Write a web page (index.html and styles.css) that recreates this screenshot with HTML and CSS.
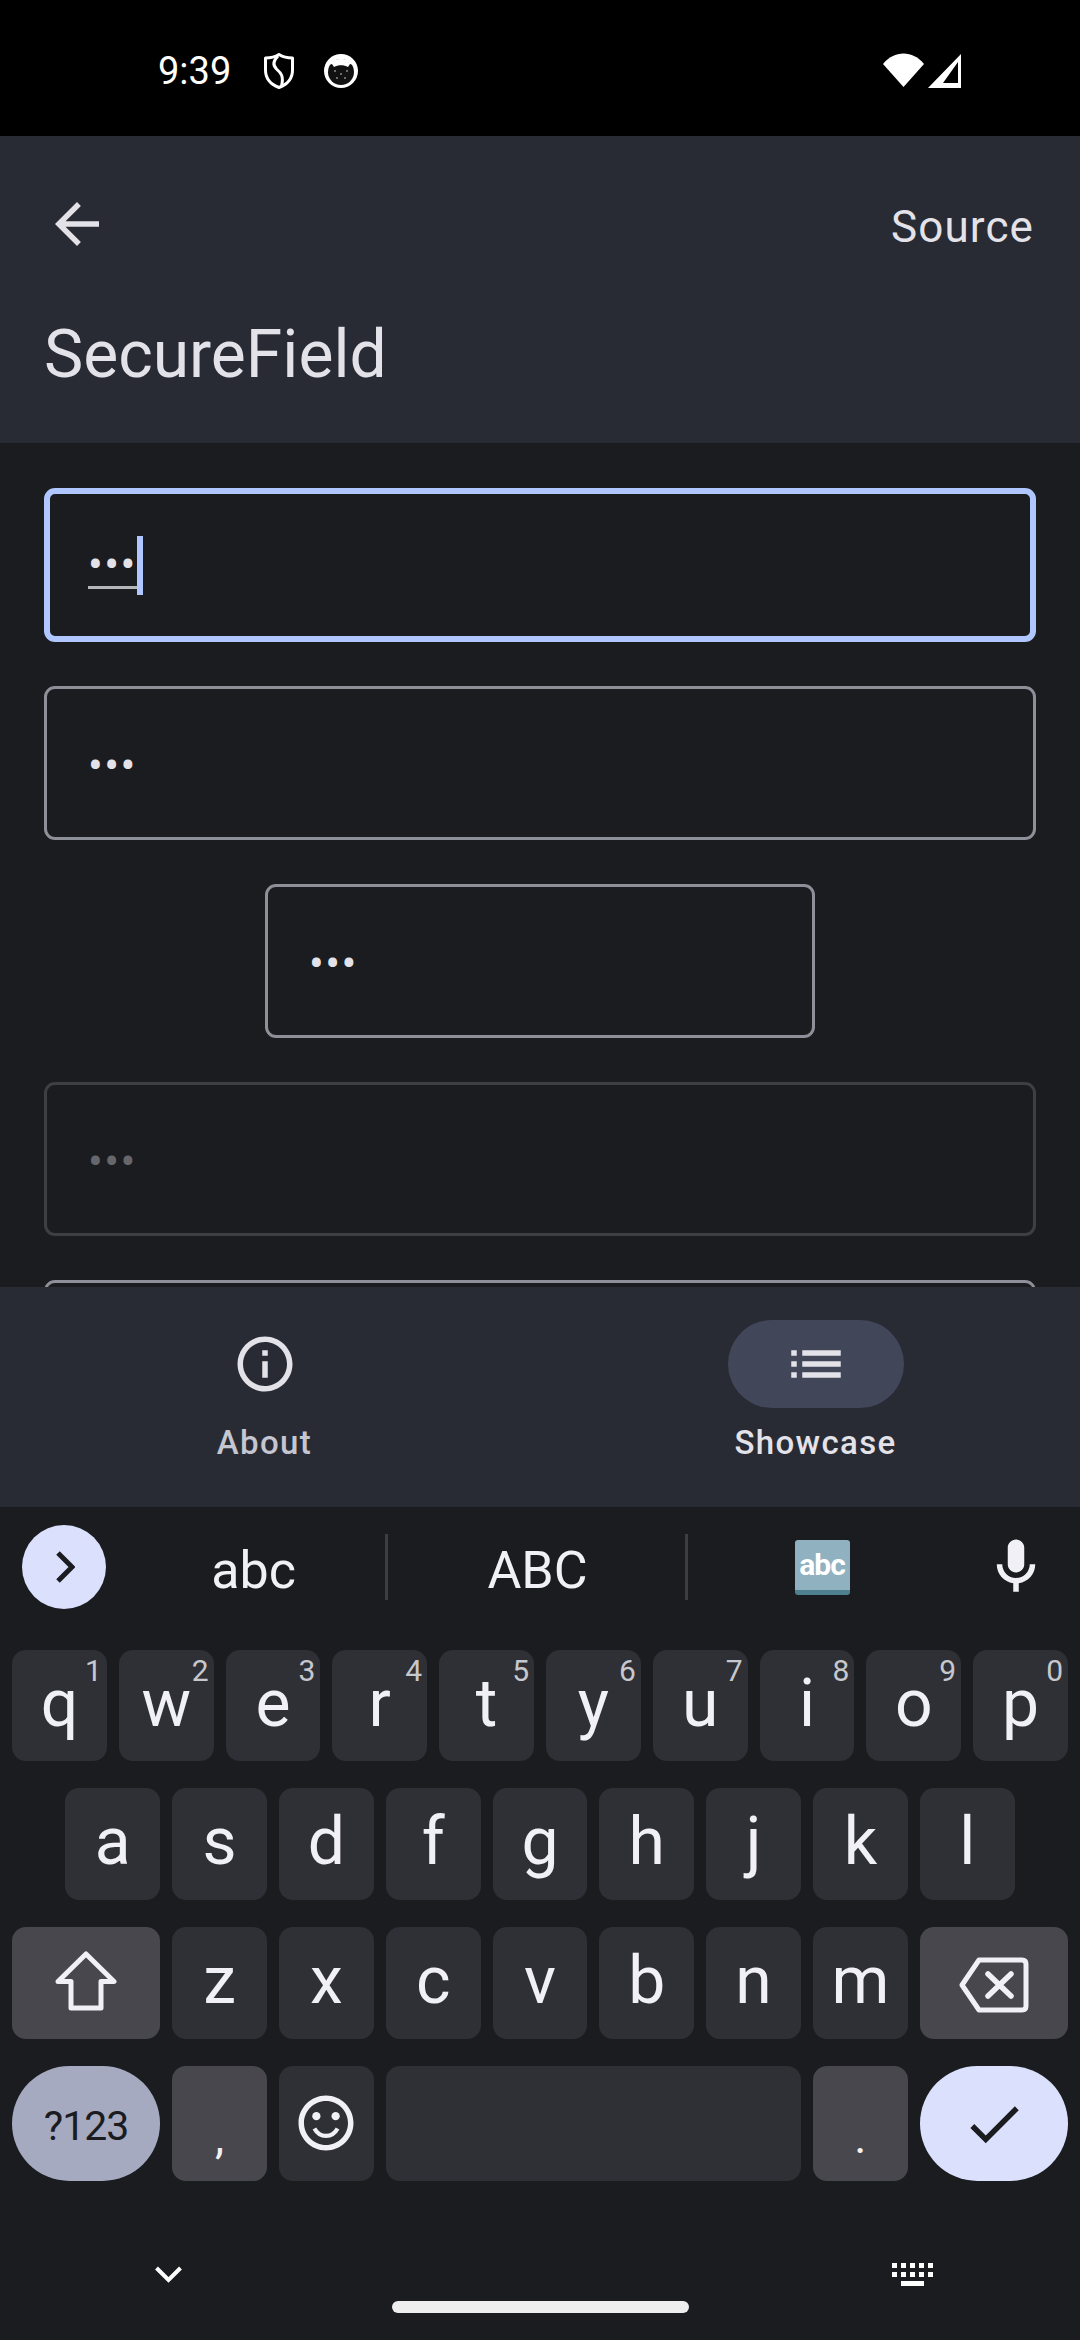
FILE: index.html
```html
<!DOCTYPE html>
<html lang="en">
<head>
<meta charset="utf-8">
<title>SecureField</title>
<link rel="stylesheet" href="styles.css">
</head>
<body>
<div class="screen">
  <div class="status">
    <span class="time">9:39</span>
    <svg class="st-shield" viewBox="0 0 30 36" width="30" height="36"><path d="M15 1.5 C19 4 24 5 28.5 5 V17 C28.5 25.5 23 31.5 15 34.5 C7 31.5 1.5 25.5 1.5 17 V5 C6 5 11 4 15 1.5Z" fill="none" stroke="#fff" stroke-width="3" stroke-linejoin="round"/><path d="M14 3 C9 8 8.5 12 12.5 16 C17 20 20 23 17.5 33" fill="none" stroke="#fff" stroke-width="3"/></svg>
    <svg class="st-cat" viewBox="0 0 36 36" width="36" height="36"><circle cx="18" cy="18" r="17" fill="#fff"/><circle cx="18" cy="19" r="13" fill="#111"/><path d="M5 12 C8 4 28 4 31 12 L27 11 L25 14 C21 11.5 15 11.5 11 14 L9 11Z" fill="#fff"/><circle cx="12" cy="18" r="1" fill="#888"/><circle cx="18" cy="21" r="1" fill="#888"/><circle cx="24" cy="18" r="1" fill="#888"/><circle cx="14" cy="25" r="1" fill="#888"/><circle cx="22" cy="25" r="1" fill="#888"/></svg>
    <span class="grow"></span>
    <svg class="st-wifi" viewBox="0 0 41 34" width="41" height="34"><path d="M0 11 C11 -3 30 -3 41 11 L20.5 34Z" fill="#fff"/></svg>
    <svg class="st-signal" viewBox="0 0 33 34" width="33" height="34"><path fill-rule="evenodd" d="M33 0V34H0ZM30 8 15 29H30Z" fill="#fff"/></svg>
  </div>

  <header class="appbar">
    <div class="appbar-row">
      <svg class="icon66" viewBox="0 0 24 24"><path d="M20 11H7.83l5.59-5.59L12 4l-8 8 8 8 1.41-1.41L7.83 13H20v-2z" fill="#e3e2e9"/></svg>
      <span class="source">Source</span>
    </div>
    <h1 class="title">SecureField</h1>
  </header>

  <main class="content">
    <div class="field focused"><span class="composing">•••</span><span class="caret"></span></div>
    <div class="field"><span class="dots">•••</span></div>
    <div class="field narrow"><span class="dots">•••</span></div>
    <div class="field disabled"><span class="dots">•••</span></div>
    <div class="field"></div>
  </main>

  <nav class="navbar">
    <div class="nav-item">
      <div class="nav-pill"><svg class="icon66" viewBox="0 0 24 24"><path d="M11 7h2v2h-2zm0 4h2v6h-2zm1-9C6.48 2 2 6.48 2 12s4.48 10 10 10 10-4.48 10-10S17.52 2 12 2zm0 18c-4.41 0-8-3.59-8-8s3.59-8 8-8 8 3.59 8 8-3.59 8-8 8z" fill="#e3e2e9"/></svg></div>
      <span class="nav-label">About</span>
    </div>
    <div class="nav-item active">
      <div class="nav-pill"><svg class="icon66" viewBox="0 0 24 24"><path d="M3 13h2v-2H3v2zm0 4h2v-2H3v2zm0-8h2V7H3v2zm4 4h14v-2H7v2zm0 4h14v-2H7v2zM7 7v2h14V7H7z" fill="#e3e2e9"/></svg></div>
      <span class="nav-label">Showcase</span>
    </div>
  </nav>

  <section class="keyboard">
    <div class="strip">
      <div class="strip-toggle"><svg viewBox="0 0 20 32" width="20" height="32"><path d="M3 2 17 16 3 30" fill="none" stroke="#1a1c20" stroke-width="5"/></svg></div>
      <span class="cand cand-a"><span class="cand-text">abc</span></span>
      <span class="cand cand-b"><span class="cand-text">ABC</span></span>
      <span class="cand cand-c"><span class="abc-emoji">abc</span></span>
      <svg class="icon66" viewBox="0 0 24 24"><path d="M12 14c1.66 0 3-1.34 3-3V5c0-1.66-1.34-3-3-3S9 3.34 9 5v6c0 1.66 1.34 3 3 3zm5-3c0 2.76-2.24 5-5 5s-5-2.24-5-5H5c0 3.53 2.61 6.43 6 6.92V21h2v-3.08c3.39-.49 6-3.39 6-6.92h-2z" fill="#f1f0f7"/></svg>
    </div>
    <div class="keys">
      <div class="key">q<sup class="digit">1</sup></div>
      <div class="key">w<sup class="digit">2</sup></div>
      <div class="key">e<sup class="digit">3</sup></div>
      <div class="key">r<sup class="digit">4</sup></div>
      <div class="key">t<sup class="digit">5</sup></div>
      <div class="key">y<sup class="digit">6</sup></div>
      <div class="key">u<sup class="digit">7</sup></div>
      <div class="key">i<sup class="digit">8</sup></div>
      <div class="key">o<sup class="digit">9</sup></div>
      <div class="key">p<sup class="digit">0</sup></div>

      <div class="key row-start">a</div>
      <div class="key">s</div>
      <div class="key">d</div>
      <div class="key">f</div>
      <div class="key">g</div>
      <div class="key">h</div>
      <div class="key">j</div>
      <div class="key">k</div>
      <div class="key">l</div>

      <div class="key wide fn"><svg viewBox="0 0 62 60" width="62" height="60"><path d="M31 3 59 30.5H46V57H16V30.500H3Z" fill="none" stroke="#f1f0f7" stroke-width="5" stroke-linejoin="round"/></svg></div>
      <div class="key">z</div>
      <div class="key">x</div>
      <div class="key">c</div>
      <div class="key">v</div>
      <div class="key">b</div>
      <div class="key">n</div>
      <div class="key">m</div>
      <div class="key wide fn"><svg class="bksp" viewBox="0 0 70 56" width="70" height="56"><path d="M20 3H63Q67 3 67 7V49Q67 53 63 53H20L3 28Z" fill="none" stroke="#f1f0f7" stroke-width="5" stroke-linejoin="round"/><path d="M29 17 52 39M52 17 29 39" fill="none" stroke="#f1f0f7" stroke-width="5.500" stroke-linecap="round"/></svg></div>

      <div class="key wide sym">?123</div>
      <div class="key fn punct">,</div>
      <div class="key"><svg class="emoji" viewBox="0 0 24 24" width="66" height="66"><path d="M12 2C6.480 2 2 6.480 2 12s4.480 10 10 10 10-4.480 10-10S17.520 2 12 2zm0 18c-4.410 0-8-3.590-8-8s3.590-8 8-8 8 3.590 8 8-3.590 8-8 8z" fill="#f1f0f7"/><circle cx="8.500" cy="9.500" r="1.500" fill="#f1f0f7"/><circle cx="15.500" cy="9.500" r="1.500" fill="#f1f0f7"/><path d="M7.800 14c.9 1.700 2.400 2.700 4.200 2.700s3.300-1 4.200-2.700" fill="none" stroke="#f1f0f7" stroke-width="1.500"/></svg></div>
      <div class="key space"></div>
      <div class="key fn punct">.</div>
      <div class="key wide enter"><svg viewBox="0 0 24 24" width="66" height="66"><path d="M9 16.170 4.830 12l-1.420 1.410L9 19 21 7l-1.410-1.410z" fill="#1a1c20"/></svg></div>
    </div>
    <div class="tools">
      <svg class="tool-chevron" viewBox="0 0 27 17" width="27" height="17"><path d="M1.500 2 13.500 14 25.500 2" fill="none" stroke="#fff" stroke-width="4"/></svg>
      <svg viewBox="0 0 41 23" width="41" height="23"><path d="M0 0h5v5H0zM9 0h5v5H9zM18 0h5v5h-5zM27 0h5v5h-5zM36 0h5v5h-5zM0 9h5v5H0zM9 9h5v5H9zM18 9h5v5h-5zM27 9h5v5h-5zM36 9h5v5h-5zM9 18h23v5H9z" fill="#fff"/></svg>
    </div>
    <div class="handle"></div>
  </section>
</div>
</body>
</html>
```

FILE: styles.css
```css
* { box-sizing: border-box; }
html, body { margin: 0; padding: 0; background: #000; height: 2340px; overflow: hidden; }
body { font-family: Roboto, "Liberation Sans", sans-serif; }

.screen { width: 1080px; height: 2340px; display: flex; flex-direction: column; overflow: hidden; background: #1a1c20; }
.icon66 { width: 66px; height: 66px; display: block; flex: none; }

.status { height: 136px; flex: none; background: #000; display: flex; align-items: center; padding: 0 119px 0 158px; color: #fff; }
.time { font-size: 38px; line-height: 44px; width: 106px; padding-top: 6px; height: 50px; }
.st-shield { flex: none; margin-top: 6px; }
.st-cat { flex: none; margin-left: 29px; margin-top: 6px; }
.grow { flex: 1; }
.st-wifi { flex: none; margin-top: 4px; }
.st-signal { flex: none; margin-left: 4px; margin-top: 6px; }

.appbar { height: 307px; flex: none; background: #282b34; padding: 55px 47px 0 44px; color: #e3e2e9; }
.appbar-row { display: flex; align-items: center; justify-content: space-between; height: 66px; }
.source { font-size: 44px; line-height: 54px; letter-spacing: 1.1px; margin-right: -1px; padding-top: 5px; height: 59px; }
.title { margin: 54px 0 0; font-size: 66px; line-height: 88px; font-weight: 400; }

.content { flex: 1; min-height: 0; overflow: hidden; padding: 45px 44px 0; display: flex; flex-direction: column; gap: 44px; background: #1a1c20; }
.field { flex: none; height: 154px; border: 3px solid #8e9099; border-radius: 11px; display: flex; align-items: center; padding-left: 41px; color: #e3e2e9; font-size: 44px; letter-spacing: 1.375px; }
.field.focused { border: 6px solid #b0c6ff; padding-left: 38px; }
.field.narrow { width: 550px; align-self: center; }
.field.disabled { border-color: #3d3f45; color: #66676c; }
.dots { line-height: 44px; padding-top: 6px; height: 50px; }
.composing { line-height: 41px; padding-top: 3px; border-bottom: 3px solid #b4b5ba; }
.caret { width: 6px; height: 59px; background: #b0c6ff; }

.navbar { height: 220px; flex: none; background: #282b34; display: flex; justify-content: center; gap: 375px; padding-top: 33px; position: relative; }
.nav-item { width: 176px; display: flex; flex-direction: column; align-items: center; }
.nav-pill { width: 176px; height: 88px; border-radius: 44px; display: flex; align-items: center; justify-content: center; }
.active .nav-pill { background: #414659; }
.nav-label { margin-top: 13px; font-size: 33px; line-height: 44px; font-weight: 500; letter-spacing: 1.375px; color: #c5c6d0; white-space: nowrap; }
.active .nav-label { color: #e3e2e9; }

.keyboard { height: 833px; flex: none; background: #1a1c20; display: flex; flex-direction: column; }
.strip { height: 120px; display: flex; align-items: center; padding-left: 22px; color: #f1f0f7; }
.strip-toggle { width: 84px; height: 84px; border-radius: 50%; background: #dbe1fc; display: flex; align-items: center; justify-content: center; flex: none; padding-left: 1px; }
.cand { display: flex; align-items: center; justify-content: center; height: 66px; font-size: 52px; }
.cand-text { padding-top: 6px; }
.cand-a { width: 282px; padding-left: 16px; border-right: 3px solid #3c3e44; }
.cand-b { width: 300px; padding-left: 2px; border-right: 3px solid #3c3e44; }
.cand-c { width: 268px; margin-right: 27px; }
.abc-emoji { width: 55px; height: 55px; border-radius: 3px; background: #8fb1c0; border-bottom: 5px solid #4f8090; color: #fff; font-size: 30px; font-weight: 700; line-height: 50px; text-align: center; letter-spacing: -1px; }

.keys { margin-top: 23px; padding: 0 12px; display: grid; grid-template-columns: repeat(20, 1fr); grid-template-rows: 111px 112px 112px 115px; gap: 27px 12px; }
.key { grid-column: span 2; position: relative; background: #2f3035; border-radius: 14px; display: flex; align-items: center; justify-content: center; color: #f1f0f7; font-size: 66px; padding-bottom: 5px; }
.key.row-start { grid-column: 2 / span 2; }
.key.wide { grid-column: span 3; }
.key.space { grid-column: span 8; }
.key.fn { background: #47474d; }
.bksp { margin-top: 8px; }
.emoji { margin-top: 3px; }
.digit { position: absolute; top: 6px; right: 5px; font-size: 30px; line-height: 30px; color: #c7c8cd; vertical-align: baseline; }
.key.sym { background: #a5aac0; color: #1a1c20; border-radius: 58px; font-size: 41px; letter-spacing: -1px; padding: 4px 0 0; }
.key.enter { background: #dbe1fc; border-radius: 58px; padding-bottom: 0; }
.key.punct { font-size: 46px; align-items: flex-end; padding-bottom: 17px; }

.tools { margin-top: 82px; padding: 0 147px 0 155px; display: flex; justify-content: space-between; align-items: flex-start; height: 38px; }
.tool-chevron { margin-top: 3px; }
.handle { width: 297px; height: 12px; border-radius: 6px; background: #eeeeee; align-self: center; }
```
